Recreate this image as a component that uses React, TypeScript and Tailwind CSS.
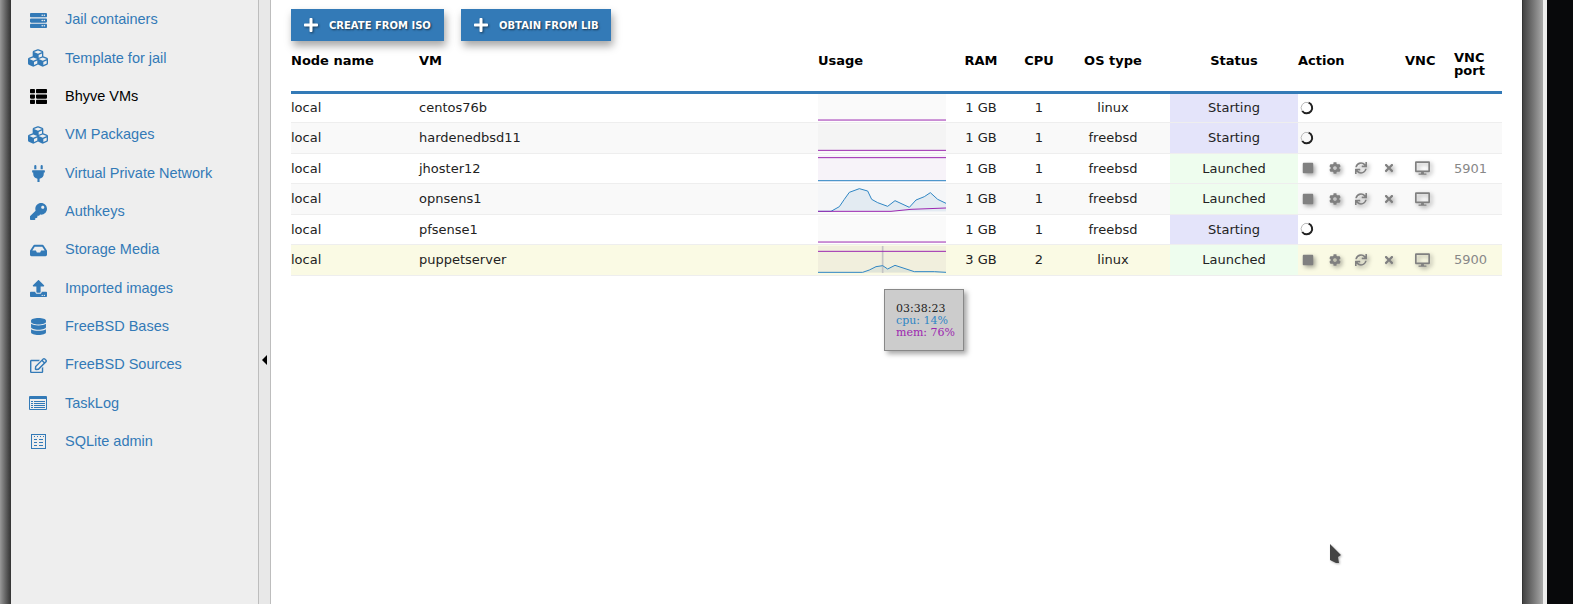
import type { ReactNode } from "react";
import {
  FaServer,
  FaCubes,
  FaThList,
  FaPlug,
  FaKey,
  FaInbox,
  FaUpload,
  FaDatabase,
  FaRegEdit,
  FaStop,
  FaCog,
  FaSync,
  FaTimes,
  FaDesktop,
  FaPlus,
} from "react-icons/fa";

const navIconClass = "h-[17px] w-[17px]";

function TaskLogIcon() {
  return (
    <svg viewBox="0 0 18 14" className="h-[14px] w-[18px]" fill="currentColor">
      <path d="M1 0h16a1 1 0 0 1 1 1v12a1 1 0 0 1-1 1H1a1 1 0 0 1-1-1V1a1 1 0 0 1 1-1zm0 3v10h16V3z" fillRule="evenodd" />
      <path d="M2 5h2v1H2zM5 5h11v1H5zM2 7h2v1H2zM5 7h11v1H5zM2 9h2v1H2zM5 9h11v1H5zM2 11h2v1H2zM5 11h11v1H5z" />
    </svg>
  );
}

function SqliteIcon() {
  return (
    <svg viewBox="0 0 15 15" className="h-[15px] w-[15px]" fill="none" stroke="currentColor">
      <rect x="0.5" y="0.5" width="14" height="14" />
      <path d="M3 2.5h1M6 2.5h1M9 2.5h1M12 2.5h1M3 5.5h3M8 5.5h4M3 8.5h3M8 8.5h4M3 11.5h3M8 11.5h4" />
    </svg>
  );
}

const navItems: { label: string; icon: ReactNode; active?: boolean }[] = [
  { label: "Jail containers", icon: <FaServer className={navIconClass} /> },
  { label: "Template for jail", icon: <FaCubes className="h-[20px] w-[20px]" /> },
  { label: "Bhyve VMs", icon: <FaThList className={navIconClass} />, active: true },
  { label: "VM Packages", icon: <FaCubes className="h-[20px] w-[20px]" /> },
  { label: "Virtual Private Network", icon: <FaPlug className={navIconClass} /> },
  { label: "Authkeys", icon: <FaKey className={navIconClass} /> },
  { label: "Storage Media", icon: <FaInbox className={navIconClass} /> },
  { label: "Imported images", icon: <FaUpload className={navIconClass} /> },
  { label: "FreeBSD Bases", icon: <FaDatabase className={navIconClass} /> },
  { label: "FreeBSD Sources", icon: <FaRegEdit className={navIconClass} /> },
  { label: "TaskLog", icon: <TaskLogIcon /> },
  { label: "SQLite admin", icon: <SqliteIcon /> },
];

type Spark = { bg: string; mem: string; cpu?: string; fill?: string; cursor?: boolean };

const starting = "M0 91H435";
const sparks: Record<string, Spark> = {
  centos76b: { bg: "#fafafa", mem: "M51 91H435" },
  hardenedbsd11: { bg: "#f4f4f4", mem: "M51 184H435" },
  jhoster12: { bg: "#f7f3f9", mem: "M51 205H435", cpu: "M51 274H435" },
  opnsens1: {
    bg: "#f5f6f8",
    mem: "M51 364H270L330 358L435 354",
    cpu: "M51 364H90L115 350L130 328L145 307L175 296L200 303L212 328L230 338L260 349L282 332L325 352L345 330L370 320L388 308L410 328L435 340",
    fill: "M51 364H90L115 350L130 328L145 307L175 296L200 303L212 328L230 338L260 349L282 332L325 352L345 330L370 320L388 308L410 328L435 340V364Z",
  },
  pfsense1: { bg: "#fafafa", mem: "M51 457H435" },
  puppetserver: {
    bg: "#f1efdd",
    mem: "M51 484H435",
    cpu: "M51 547H185L205 540L225 530L245 527L260 537L282 526L340 545L400 545L435 547",
    fill: "M51 547H185L205 540L225 530L245 527L260 537L282 526L340 545L400 545L435 547Z",
    cursor: true,
  },
};

const viewBoxes: Record<string, string> = {
  centos76b: "51 10 384 84",
  hardenedbsd11: "51 105 384 81",
  jhoster12: "51 197 384 81",
  opnsens1: "51 285 384 81",
  pfsense1: "51 376 384 84",
  puppetserver: "51 468 384 81",
};

function Sparkline({ vm }: { vm: string }) {
  const s = sparks[vm];
  return (
    <svg
      viewBox={viewBoxes[vm]}
      preserveAspectRatio="none"
      className="block h-[27px] w-[128px]"
      style={{ background: s.bg }}
    >
      {s.fill && <path d={s.fill} fill="#1f78b4" fillOpacity="0.08" />}
      {s.cursor && <path d="M245 468V549" stroke="#c4c4c4" strokeWidth="5" />}
      {s.cpu && <path d={s.cpu} fill="none" stroke="#2f86c4" strokeWidth="3" />}
      <path d={s.mem} fill="none" stroke="#9c27b0" strokeWidth="3" />
    </svg>
  );
}

function Spinner() {
  return (
    <svg viewBox="0 0 14 14" className="ml-[2px] h-[14px] w-[14px]" fill="none">
      <path d="M8.5 1.6A5.5 5.5 0 1 1 2.2 10" stroke="#222" strokeWidth="2" />
      <path d="M2.2 10A5.5 5.5 0 0 1 8.5 1.6" stroke="#bbb" strokeWidth="1" />
    </svg>
  );
}

const shadow = "drop-shadow-[2px_2px_2px_rgba(0,0,0,0.35)]";

function Actions() {
  return (
    <div className="flex items-center text-[#808080]">
      <span className="flex w-[27px] pl-[4px]">
        <FaStop className={`h-[12px] w-[12px] ${shadow}`} />
      </span>
      <span className="flex w-[27px] pl-[4px]">
        <FaCog className={`h-[12px] w-[12px] ${shadow}`} />
      </span>
      <span className="flex w-[28px] pl-[3px]">
        <FaSync className={`h-[12px] w-[12px] ${shadow}`} />
      </span>
      <span className="flex w-[25px] pl-[3px]">
        <FaTimes className={`h-[12px] w-[12px] ${shadow}`} />
      </span>
    </div>
  );
}

const rows = [
  { vm: "centos76b", ram: "1 GB", cpu: "1", os: "linux", status: "Starting", port: "", cls: "bg-white" },
  { vm: "hardenedbsd11", ram: "1 GB", cpu: "1", os: "freebsd", status: "Starting", port: "", cls: "bg-[#f9f9f9]" },
  { vm: "jhoster12", ram: "1 GB", cpu: "1", os: "freebsd", status: "Launched", port: "5901", cls: "bg-white" },
  { vm: "opnsens1", ram: "1 GB", cpu: "1", os: "freebsd", status: "Launched", port: "", cls: "bg-[#f9f9f9]" },
  { vm: "pfsense1", ram: "1 GB", cpu: "1", os: "freebsd", status: "Starting", port: "", cls: "bg-white" },
  { vm: "puppetserver", ram: "3 GB", cpu: "2", os: "linux", status: "Launched", port: "5900", cls: "bg-[#fafae4]" },
];

function ActionButton({ label, className }: { label: string; className: string }) {
  return (
    <button
      className={`flex h-[32px] items-center bg-[#337ab7] pl-[12px] text-[10px] font-bold text-white shadow-[2px_5px_8px_rgba(0,0,0,0.35)] [text-shadow:1px_1px_2px_rgba(0,0,0,0.6)] ${className}`}
    >
      <FaPlus className="mr-[10px] h-[16px] w-[16px] drop-shadow-[1px_1px_1px_rgba(0,0,0,0.5)]" />
      {label}
    </button>
  );
}

export default function App() {
  return (
    <div className="relative flex h-[604px] w-[1573px] overflow-hidden bg-[#08090b] font-['DejaVu_Sans',sans-serif]">
      {/* window shadow, left */}
      <div className="w-[11px] shrink-0 bg-gradient-to-r from-[#999999] to-[#333333]" />

      <aside className="w-[248px] shrink-0 border-r border-[#bdbdbd] bg-[#eeeeee] pt-px font-['Liberation_Sans',sans-serif] text-[14.5px]">
        {navItems.map((item) => (
          <div
            key={item.label}
            className={`flex h-[38.33px] items-center ${item.active ? "text-black" : "text-[#337ab7]"}`}
          >
            <span className="flex w-[54px] justify-center pl-[1px] pr-[1px]">{item.icon}</span>
            {item.label}
          </div>
        ))}
      </aside>

      {/* collapse handle */}
      <div className="flex w-[12px] shrink-0 items-start justify-center border-r border-[#bdbdbd] bg-[#e8e8e8] pt-[355px]">
        <span className="h-0 w-0 border-y-[5px] border-r-[5px] border-y-transparent border-r-black" />
      </div>

      <main className="w-[1251px] shrink-0 bg-white pl-[20px] pt-[9px] text-[13px] text-[#222]">
        <div className="flex gap-[17px]">
          <ActionButton label="CREATE FROM ISO" className="w-[153px]" />
          <ActionButton label="OBTAIN FROM LIB" className="w-[150px]" />
        </div>

        <table className="mt-[5px] w-[1211px] table-fixed border-collapse">
          <colgroup>
            <col className="w-[128px]" />
            <col className="w-[399px]" />
            <col className="w-[128px]" />
            <col className="w-[70px]" />
            <col className="w-[46px]" />
            <col className="w-[108px]" />
            <col className="w-[128px]" />
            <col className="w-[107px]" />
            <col className="w-[49px]" />
            <col className="w-[48px]" />
          </colgroup>
          <thead>
            <tr className="h-[46px] border-b-[3px] border-[#337ab7] align-top text-black">
              <th className="pt-[5px] text-left font-bold">Node name</th>
              <th className="pt-[5px] text-left font-bold">VM</th>
              <th className="pt-[5px] text-left font-bold">Usage</th>
              <th className="pt-[5px] text-center font-bold">RAM</th>
              <th className="pt-[5px] text-center font-bold">CPU</th>
              <th className="pr-[6px] pt-[5px] text-center font-bold">OS type</th>
              <th className="pt-[5px] text-center font-bold">Status</th>
              <th className="pt-[5px] text-left font-bold">Action</th>
              <th className="pt-[5px] text-left font-bold">VNC</th>
              <th className="pt-[5px] text-left font-bold leading-[13px]">
                VNC port
              </th>
            </tr>
          </thead>
          <tbody>
            {rows.map((r) => (
              <tr key={r.vm} className={`h-[30.5px] border-b border-[#eeeeee] ${r.cls}`}>
                <td>local</td>
                <td>{r.vm}</td>
                <td>
                  <Sparkline vm={r.vm} />
                </td>
                <td className="text-center">{r.ram}</td>
                <td className="text-center">{r.cpu}</td>
                <td className="pr-[6px] text-center">{r.os}</td>
                <td className={`text-center ${r.status === "Starting" ? "bg-[#e4e4fa]" : "bg-[#eefdee]"}`}>
                  {r.status}
                </td>
                <td>{r.status === "Starting" ? <Spinner /> : <Actions />}</td>
                <td>
                  {r.status === "Launched" && (
                    <span className="flex pl-[10px] text-[#808080]">
                      <FaDesktop className={`h-[14px] w-[15px] ${shadow}`} />
                    </span>
                  )}
                </td>
                <td className="text-[#888888]">{r.port}</td>
              </tr>
            ))}
          </tbody>
        </table>
      </main>

      {/* window shadow, right */}
      <div className="w-[21px] shrink-0 border-l border-[#333] bg-gradient-to-r from-[#444444] to-[#aaaaaa]" />
      <div className="w-[4px] shrink-0 bg-[#eeeeee]" />

      {/* chart tooltip */}
      <div className="absolute left-[884px] top-[289px] h-[62px] w-[80px] border border-[#888888] bg-[#cccccc] pl-[11px] pt-[13px] font-['DejaVu_Serif',serif] text-[11px] leading-[12px] shadow-[3px_3px_5px_rgba(0,0,0,0.35)]">
        <div className="text-[#222]">03:38:23</div>
        <div className="text-[#2f86c4]">cpu: 14%</div>
        <div className="text-[#9c27b0]">mem: 76%</div>
      </div>

      {/* mouse cursor */}
      <svg viewBox="0 0 12 20" className="absolute left-[1330px] top-[544px] h-[20px] w-[12px] drop-shadow-[1px_1px_1px_rgba(0,0,0,0.3)]">
        <path d="M0 0L11 11L8 13L9 19L6 19L0 16Z" fill="#444444" />
      </svg>
    </div>
  );
}
